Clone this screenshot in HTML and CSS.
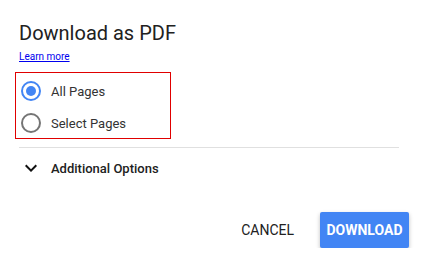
FILE: index.html
```html
<!DOCTYPE html>
<html lang="en">
<head>
    <meta charset="UTF-8">
    <meta name="viewport" content="width=device-width, initial-scale=1.0">
    <title>Download as PDF</title>
    <link rel="stylesheet" href="styles.css">
</head>
<body>
    <div class="dialog">
        <div class="title">Download as PDF</div>
        <a class="learn" href="#">Learn more</a>

        <div class="pages">
            <label class="option">
                <span class="radio checked"></span>
                <span>All Pages</span>
            </label>
            <label class="option">
                <span class="radio"></span>
                <span>Select Pages</span>
            </label>
        </div>

        <div class="divider"></div>

        <div class="more">
            <svg class="chevron" viewBox="0 0 24 24" width="24" height="24">
                <path d="M16.59 8.59L12 13.17 7.41 8.59 6 10l6 6 6-6z"/>
            </svg>
            <span>Additional Options</span>
        </div>

        <div class="actions">
            <button class="btn cancel" type="button">Cancel</button>
            <button class="btn download" type="button">Download</button>
        </div>
    </div>
</body>
</html>
```

FILE: styles.css
```css
body, html {
    margin: 0;
    padding: 0;
    background: white;
    font-family: Roboto, "Liberation Sans", sans-serif;
    color: #212121;
}
.dialog {
    padding: 21px 22px 0 19px;
}
.title {
    font-size: 20px;
    line-height: 24px;
    color: #212121;
}
.learn {
    display: block;
    margin-top: 6px;
    font-size: 10px;
    line-height: 12px;
    color: #0000ee;
    width: max-content;
}
.pages {
    margin: 9px 0 0 -4px;
    width: 154px;
    border: 1px solid #e00000;
    padding: 3px 0 0 5px;
    box-sizing: border-box;
    width: 156px;
    display: flex;
    flex-direction: column;
    gap: 2px;
}
.option {
    display: flex;
    align-items: center;
    height: 30px;
    font-size: 13px;
    color: #333;
}
.radio {
    width: 20px;
    height: 20px;
    box-sizing: border-box;
    border: 2px solid #757575;
    border-radius: 50%;
    margin-right: 10px;
    position: relative;
}
.radio.checked {
    border-color: #4285f4;
}
.radio.checked::after {
    content: "";
    position: absolute;
    left: 3px;
    top: 3px;
    width: 10px;
    height: 10px;
    border-radius: 50%;
    background: #4285f4;
}
.divider {
    margin-top: 8px;
    height: 1px;
    background: #e0e0e0;
}
.more {
    display: flex;
    align-items: center;
    height: 40px;
    font-size: 13px;
    font-weight: 500;
    color: #212121;
}
.chevron {
    margin-right: 8px;
    fill: #111;
}
.actions {
    display: flex;
    justify-content: flex-end;
    margin: 24px -10px 0 0;
}
.btn {
    height: 36px;
    border: none;
    font-family: Roboto, "Liberation Sans", sans-serif;
    font-size: 14px;
    text-transform: uppercase;
    border-radius: 2px;
    cursor: pointer;
}
.cancel {
    background: none;
    color: #212121;
    padding: 0 16px;
    margin-right: 10px;
}
.download {
    background: #4285f4;
    color: white;
    font-weight: bold;
    padding: 0 6px;
    width: 89px;
    box-shadow: 0 2px 4px rgba(0, 0, 0, 0.25);
}
```
